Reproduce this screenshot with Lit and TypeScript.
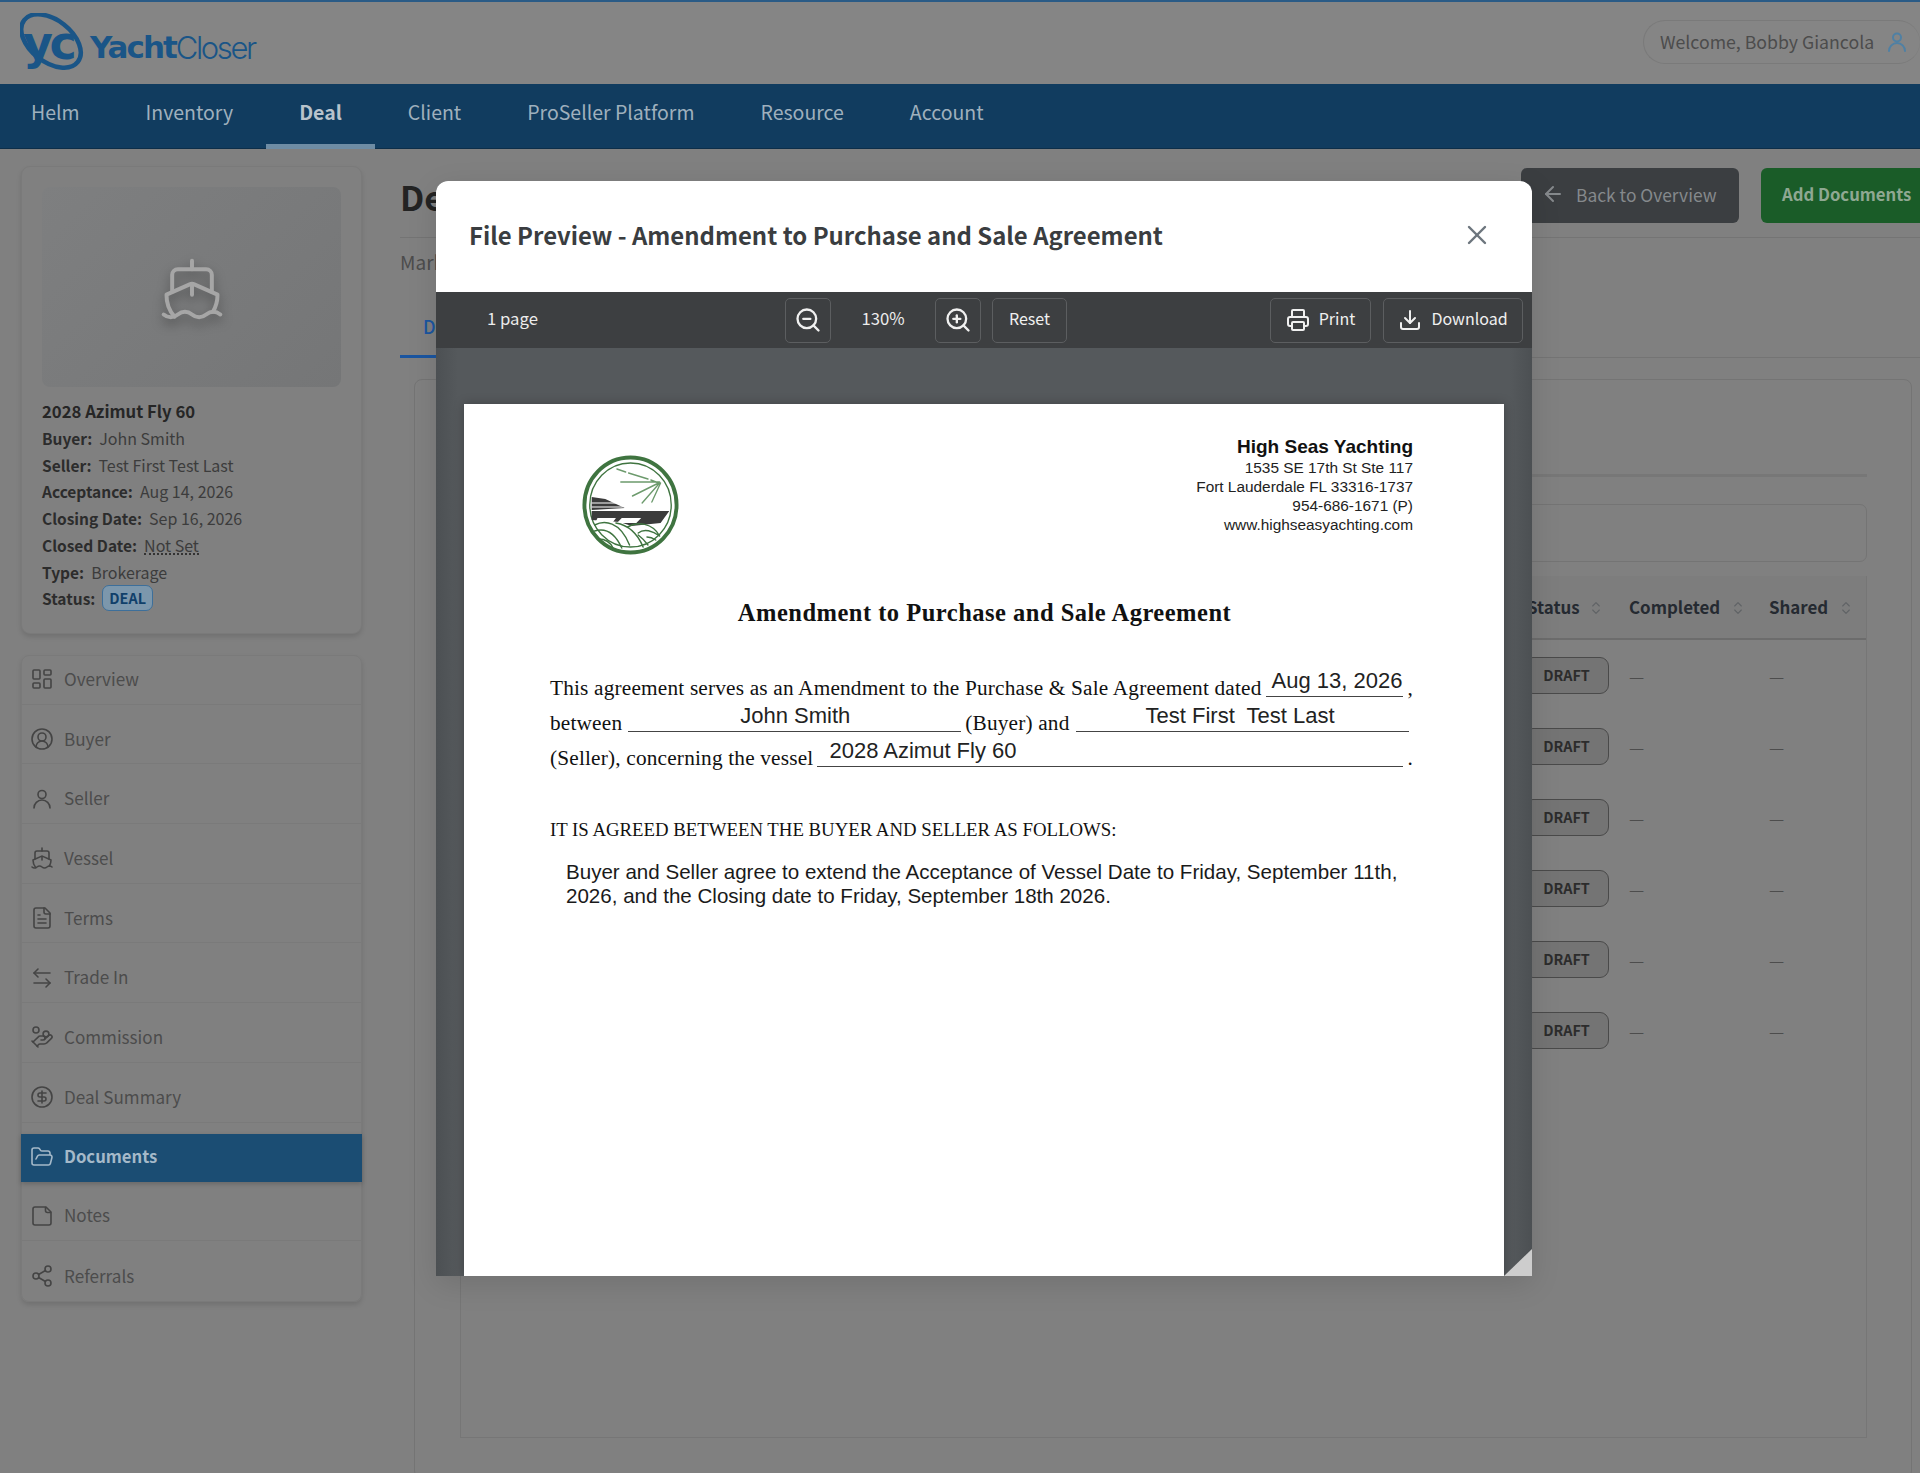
import { LitElement, html, css, svg } from "lit";
import { customElement } from "lit/decorators.js";

const ic = (body: unknown, cls = "ic") =>
  html`<svg class=${cls} viewBox="0 0 24 24" fill="none" stroke="currentColor" stroke-width="2" stroke-linecap="round" stroke-linejoin="round">${body}</svg>`;

const icons: Record<string, unknown> = {
  overview: svg`<rect x="3" y="3" width="7" height="9" rx="1"/><rect x="14" y="3" width="7" height="5" rx="1"/><rect x="14" y="12" width="7" height="9" rx="1"/><rect x="3" y="16" width="7" height="5" rx="1"/>`,
  buyer: svg`<path d="M18 20a6 6 0 0 0-12 0"/><circle cx="12" cy="10" r="4"/><circle cx="12" cy="12" r="10"/>`,
  seller: svg`<circle cx="12" cy="7.5" r="4"/><path d="M20 21a8 8 0 0 0-16 0"/>`,
  ship: svg`<path d="M12 10.189V14"/><path d="M12 2v3"/><path d="M19 13V7a2 2 0 0 0-2-2H7a2 2 0 0 0-2 2v6"/><path d="M19.38 20A11.6 11.6 0 0 0 21 14l-8.188-3.639a2 2 0 0 0-1.624 0L3 14a11.6 11.6 0 0 0 2.81 7.76"/><path d="M2 21c.6.5 1.2 1 2.5 1 2.5 0 2.5-2 5-2 1.3 0 1.9.5 2.5 1s1.2 1 2.5 1c2.5 0 2.5-2 5-2 1.3 0 1.9.5 2.5 1"/>`,
  terms: svg`<path d="M15 2H6a2 2 0 0 0-2 2v16a2 2 0 0 0 2 2h12a2 2 0 0 0 2-2V7Z"/><path d="M14 2v4a2 2 0 0 0 2 2h4"/><path d="M10 9H8"/><path d="M16 13H8"/><path d="M16 17H8"/>`,
  trade: svg`<path d="M8 3 4 7l4 4"/><path d="M4 7h16"/><path d="m16 21 4-4-4-4"/><path d="M20 17H4"/>`,
  commission: svg`<path d="M11 15h2a2 2 0 1 0 0-4h-3c-.6 0-1.1.2-1.4.6L3 17"/><path d="m7 21 1.6-1.4c.3-.4.8-.6 1.4-.6h4c1.1 0 2.1-.4 2.8-1.2l4.6-4.4a2 2 0 0 0-2.75-2.91l-4.2 3.9"/><path d="m2 16 6 6"/><circle cx="16" cy="9" r="2.9"/><circle cx="6" cy="5" r="3"/>`,
  dollar: svg`<circle cx="12" cy="12" r="10"/><path d="M16 8h-6a2 2 0 1 0 0 4h4a2 2 0 1 1 0 4H8"/><path d="M12 18V6"/>`,
  folder: svg`<path d="m6 14 1.5-2.9A2 2 0 0 1 9.24 10H20a2 2 0 0 1 1.94 2.5l-1.54 6a2 2 0 0 1-1.95 1.5H4a2 2 0 0 1-2-2V5a2 2 0 0 1 2-2h3.9a2 2 0 0 1 1.69.9l.81 1.2a2 2 0 0 0 1.67.9H18a2 2 0 0 1 2 2v2"/>`,
  note: svg`<path d="M16 3H5a2 2 0 0 0-2 2v14a2 2 0 0 0 2 2h14a2 2 0 0 0 2-2V8Z"/><path d="M15.5 3.5v3a2 2 0 0 0 2 2h3"/>`,
  share: svg`<circle cx="18" cy="5" r="3"/><circle cx="6" cy="12" r="3"/><circle cx="18" cy="19" r="3"/><line x1="8.59" y1="13.51" x2="15.42" y2="17.49"/><line x1="15.41" y1="6.51" x2="8.59" y2="10.49"/>`,
  zoomOut: svg`<circle cx="11" cy="11" r="8"/><line x1="21" y1="21" x2="16.65" y2="16.65"/><line x1="8" y1="11" x2="14" y2="11"/>`,
  zoomIn: svg`<circle cx="11" cy="11" r="8"/><line x1="21" y1="21" x2="16.65" y2="16.65"/><line x1="11" y1="8" x2="11" y2="14"/><line x1="8" y1="11" x2="14" y2="11"/>`,
  print: svg`<path d="M6 18H4a2 2 0 0 1-2-2v-5a2 2 0 0 1 2-2h16a2 2 0 0 1 2 2v5a2 2 0 0 1-2 2h-2"/><path d="M6 9V3a1 1 0 0 1 1-1h10a1 1 0 0 1 1 1v6"/><rect x="6" y="14" width="12" height="8" rx="1"/>`,
  download: svg`<path d="M21 15v4a2 2 0 0 1-2 2H5a2 2 0 0 1-2-2v-4"/><polyline points="7 10 12 15 17 10"/><line x1="12" y1="15" x2="12" y2="3"/>`,
  back: svg`<path d="m12 19-7-7 7-7"/><path d="M19 12H5"/>`,
  x: svg`<path d="M18 6 6 18"/><path d="m6 6 12 12"/>`,
  sort: svg`<path d="m7 15 5 5 5-5"/><path d="m7 9 5-5 5 5"/>`,
};

const nav = ["Helm", "Inventory", "Deal", "Client", "ProSeller Platform", "Resource", "Account"];
const menu: [string, string][] = [
  ["overview", "Overview"], ["buyer", "Buyer"], ["seller", "Seller"], ["ship", "Vessel"],
  ["terms", "Terms"], ["trade", "Trade In"], ["commission", "Commission"], ["dollar", "Deal Summary"],
  ["folder", "Documents"], ["note", "Notes"], ["share", "Referrals"],
];
const info: [string, string][] = [
  ["Buyer:", "John Smith"], ["Seller:", "Test First Test Last"], ["Acceptance:", "Aug 14, 2026"],
  ["Closing Date:", "Sep 16, 2026"],
];

@customElement("app-root")
export class AppRoot extends LitElement {
  static styles = css`
    :host { display: block; position: relative; width: 1920px; height: 1473px; overflow: hidden; background: #808080; color: #2a2a2a; font-family: "Noto Sans CJK SC", "Noto Sans", sans-serif; }
    * { box-sizing: border-box; }
    .ic { width: 24px; height: 24px; flex: none; display: block; }
    .top { height: 84px; border-top: 2px solid #2a5b86; background: #858585; display: flex; align-items: center; justify-content: space-between; padding-left: 20px; }
    .logo { display: flex; align-items: center; height: 60px; color: #1a5587; }
    .mark { width: 70px; height: 60px; flex: none; }
    .mark text { font-family: "DejaVu Sans", sans-serif; font-weight: 700; font-size: 46px; letter-spacing: -3.5px; fill: #1a5587; }
    .yacht { font-family: "DejaVu Sans", sans-serif; font-weight: 700; font-size: 31px; letter-spacing: -2px; margin-top: 8px; }
    .closer { font-family: "Inter", sans-serif; font-weight: 300; font-size: 31px; letter-spacing: -2.4px; margin-top: 8px; }
    .pill { display: flex; align-items: center; justify-content: space-between; height: 44px; width: 277px; margin-top: -2px; padding: 0 11px 0 16px; border: 1px solid #7a7a7a; border-right: 0; border-radius: 22px; font-size: 17.7px; color: #4c4c4c; white-space: nowrap; }
    .pill span { margin-top: -2px; }
    .pill .ic { color: #4f80a4; }
    .nav { height: 65px; background: #113c5f; border-bottom: 1px solid #0d2e49; display: flex; padding-left: 31px; font-size: 19.5px; color: #9fb0bd; }
    .nav a { padding: 0 33px 11px; display: flex; align-items: center; height: 65px; }
    .nav a:first-child { padding-left: 0; }
    .nav a.on { font-weight: 700; color: #b8c3cc; border-bottom: 5px solid #6e8ca4; padding-bottom: 6px; }
    .body { display: flex; }
    aside { width: 341px; margin: 17px 38px 0 21px; flex: none; }
    .card { height: 468px; border: 1px solid #7a7a7a; border-radius: 9px; padding: 20px 20px 0; background: #808080; box-shadow: 0 3px 5px rgba(0,0,0,.12); }
    .photo { height: 200px; padding-top: 4px; border-radius: 8px; background: linear-gradient(135deg, #7e7f80, #757677); display: flex; align-items: center; justify-content: center; color: #a6a6a6; }
    .boat { width: 68px; height: 68px; stroke-width: 1.4; filter: drop-shadow(0 5px 6px rgba(0,0,0,.35)); }
    .info { margin-top: 10px; font-size: 16px; line-height: 26.7px; color: #3c3c3c; white-space: nowrap; }
    .name { font-size: 16.7px; font-weight: 700; line-height: 28px; color: #262626; }
    .info b { font-size: 15.5px; font-weight: 700; color: #2c2c2c; margin-right: 7px; }
    .dotted { border-bottom: 2px dotted #333; line-height: 1; display: inline-block; }
    .badge { display: inline-block; height: 26px; line-height: 23px; padding: 0 6px; border: 1px solid #3d6f9a; border-radius: 7px; background: #7c97ac; color: #10406a; font-weight: 700; font-size: 14.4px; vertical-align: 1px; }
    .menu { margin-top: 21px; border: 1px solid #7a7a7a; border-radius: 8px; box-shadow: 0 3px 5px rgba(0,0,0,.12); display: flex; flex-direction: column; gap: 11px; }
    .menu a { height: 48.7px; display: flex; align-items: center; gap: 10px; padding-left: 8px; font-size: 17.1px; color: #4c4c4c; border-bottom: 1px solid #7a7a7a; }
    .menu a span { margin-top: -3px; }
    .menu a:last-child { border-bottom: 0; }
    .menu a .ic { stroke-width: 1.6; color: #444; margin-top: -1px; }
    .menu a.on { background: #1b4d73; color: #a5b9c9; font-size: 16.7px; font-weight: 700; border: 0; margin: 0 -1px; height: 48px; box-shadow: 0 2px 5px rgba(0,0,0,.2); padding-left: 9px; }
    .menu a.on .ic { color: #a5b9c9; }
    main { flex: 1; min-width: 0; padding-top: 19px; }
    .head { display: flex; justify-content: space-between; height: 70px; border-bottom: 1px solid #747474; padding-bottom: 15px; }
    h1 { margin: 0; font-size: 34px; line-height: 58px; font-weight: 700; color: #232323; }
    .btns { display: flex; gap: 22px; margin-right: -13px; }
    .btn { height: 55px; border-radius: 6px; display: flex; align-items: center; font-size: 17.4px; padding-bottom: 3px; }
    .back { width: 218px; padding-left: 20px; gap: 11px; background: #3b3e41; color: #85898c; }
    .add { width: 172px; padding-left: 21px; background: #1a5c28; color: #8fa892; font-weight: 700; font-size: 16.7px; }
    .sub { margin-top: 14px; font-size: 19px; line-height: 20px; color: #4c4c4c; }
    .tabs { margin-top: 25px; height: 61px; border-bottom: 1px solid #747474; display: flex; }
    .tab { height: 61px; padding: 0 23px; line-height: 58px; font-size: 18px; font-weight: 500; color: #1a55a0; border-bottom: 3px solid #1a55a0; }
    .panel { margin: 21px 8px 0 14px; height: 1100px; border: 1px solid #747474; border-radius: 8px; padding: 0 44px 0 45px; }
    .ph { height: 97px; border-bottom: 3px solid #777; }
    .search { margin-top: 27px; height: 58px; border: 1px solid #747474; border-radius: 7px; }
    .table { margin-top: 14px; height: 862px; border: 1px solid #767676; border-top: 0; }
    .row { display: grid; grid-template-columns: 1fr 105px 140px 97px; align-items: center; height: 71px; }
    .row.hd { height: 64px; padding-bottom: 2px; background: #7d7d7d; border-bottom: 2px solid #6c6c6c; font-weight: 700; font-size: 16.9px; color: #252a31; }
    .cell { display: flex; align-items: center; gap: 10px; }
    .cell .ic { width: 16px; height: 18px; color: #5f6265; stroke-width: 1.6; margin-top: 3px; }
    .cell.st { padding-left: 3px; gap: 8px; }
    .draft { width: 85px; height: 37px; padding-bottom: 2px; display: flex; align-items: center; justify-content: center; background: #747474; border: 1px solid #4a4a4a; border-radius: 9px; font-size: 14.4px; font-weight: 700; color: #2c2c2c; }
    .dash { font-size: 17px; color: #4d4d4d; }

    .modal { position: absolute; left: 436px; top: 181px; width: 1096px; height: 1095px; background: #525659; border-radius: 12px 12px 0 0; box-shadow: 0 8px 30px rgba(0,0,0,.12); overflow: hidden; display: flex; flex-direction: column; }
    .mh { height: 111px; background: #fff; display: flex; align-items: center; justify-content: space-between; padding: 0 39px 0 33px; flex: none; }
    .mh h2 { margin: -5px 0 0; font-size: 23.9px; font-weight: 600; color: #3a3d40; white-space: nowrap; }
    .close { width: 32px; height: 32px; color: #6c757d; margin-top: -3px; stroke-width: 1.8; }
    .bar { height: 56px; background: #3d3f41; flex: none; display: flex; align-items: center; color: #ececec; font-size: 16.7px; padding-left: 51px; padding-right: 9px; }
    .pages { width: 298px; margin-top: -4px; }
    .tb { height: 45px; border: 1px solid #5c5e60; border-radius: 5px; display: flex; align-items: center; justify-content: center; gap: 9px; color: #f0f0f0; font-size: 16px; }
    .tb span { margin-top: -4px; }
    .tb .ic { width: 24px; height: 24px; }
    .tb.sq { width: 46px; }
    .tb.sq .ic { width: 28px; height: 28px; }
    .pct { width: 104px; text-align: center; margin-top: -4px; }
    .reset { width: 75px; margin-left: 11px; }
    .print { width: 101px; margin-left: auto; }
    .dl { width: 140px; margin-left: 12px; }
    .gutter { flex: 1; padding: 56px 28px 0; position: relative; background: linear-gradient(90deg, #4c5053, #55595c 2%, #55595c 98%, #4c5053); }
    .pg { height: 100%; background: #fff; padding: 32px 91px 0 86px; color: #111; box-shadow: 0 0 10px rgba(0,0,0,.25); font-family: "Liberation Serif", serif; font-size: 21.3px; }
    .corner { position: absolute; right: 0; bottom: 0; width: 28px; height: 27px; background: #cdcdcd; clip-path: polygon(100% 0, 100% 100%, 0 100%); }
    .lh { display: flex; justify-content: space-between; height: 123px; }
    .seal { width: 97px; height: 100px; margin: 19px 0 0 32px; }
    .addr { font-family: "Liberation Sans", sans-serif; font-size: 15.4px; line-height: 19px; text-align: right; color: #222; }
    .addr b { display: block; font-size: 19px; line-height: 22px; color: #111; }
    .pg h3 { margin: 39px 0 0 6px; text-align: center; font-size: 24.5px; line-height: 30px; font-weight: 700; letter-spacing: .5px; }
    .ln { display: flex; align-items: flex-end; height: 35px; white-space: nowrap; line-height: 22px; letter-spacing: .18px; }
    .ln.first { margin-top: 34px; }
    .ln .t { margin-bottom: -2px; }
    .fld { border-bottom: 1.5px solid #444; font-family: "Liberation Sans", sans-serif; font-size: 22px; letter-spacing: 0; line-height: 28px; height: 30px; color: #222; flex: 1; margin: 0 4px 0 6px; white-space: pre; }
    .f1 { padding-left: 6px; margin-left: 4px; }
    .f2 { padding-left: 112px; flex: none; width: 333px; }
    .f3 { padding-left: 70px; }
    .f4 { padding-left: 12px; margin-left: 4px; }
    .agreed { margin-top: 52px; line-height: 22px; font-size: 18.8px; white-space: nowrap; }
    .terms { margin: 19px 0 0 16px; font-family: "Liberation Sans", sans-serif; font-size: 20.57px; line-height: 23.5px; color: #1a1a1a; white-space: nowrap; }
  `;

  private seal() {
    return html`<svg class="seal" viewBox="0 0 100 100" fill="none" preserveAspectRatio="none">
      <circle cx="50" cy="50" r="47.5" stroke="#3f7440" stroke-width="4"/>
      <circle cx="50" cy="50" r="42" stroke="#3f7440" stroke-width="1.4"/>
      <g stroke="#6c9a6c" stroke-width="1.4" stroke-linecap="round">
        <path d="M36 14l9 3M48 18l20 6M71 25l8 3M40 27h40M52 41l27-13M62 48l18-20M72 47l9-19"/>
      </g>
      <path d="M10 42l14 2 20 9-34 2zM10 56l80 0-9 12-30 3-12-4-29-2z" fill="#3b3b3b"/>
      <path d="M16 63h19l-3 4H14zM41 63h20l-5 5H36z" fill="#fff"/>
      <path d="M10 48h28M10 52h32" stroke="#fff" stroke-width="1.2"/>
      <g stroke="#3f7440" stroke-width="1.5" stroke-linecap="round">
        <path d="M13 70c10-5 26-4 36 20M13 76c10-3 20 0 28 17M17 84c6 0 12 3 15 9M35 68c12 2 22 10 28 24M47 72c10-6 26-4 33 9M58 78c6-5 15-2 22 3M68 90c-3-4-6-7-10-10M76 85c-3-2-7-3-9-3"/>
      </g>
    </svg>`;
  }

  render() {
    return html`
      <div class="top">
        <div class="logo">
          <svg class="mark" viewBox="0 0 70 60" fill="none">
            <ellipse cx="31" cy="28" rx="34" ry="21" transform="rotate(38 31 28)" stroke="#1a5587" stroke-width="4.5"/>
            <text x="3" y="46">yc</text>
          </svg>
          <span class="yacht">Yacht</span><span class="closer">Closer</span>
        </div>
        <div class="pill"><span>Welcome, Bobby Giancola</span>${ic(icons.seller)}</div>
      </div>
      <div class="nav">${nav.map((n) => html`<a class=${n === "Deal" ? "on" : ""}>${n}</a>`)}</div>
      <div class="body">
        <aside>
          <div class="card">
            <div class="photo">${ic(icons.ship, "boat")}</div>
            <div class="info">
              <div class="name">2028 Azimut Fly 60</div>
              ${info.map(([k, v]) => html`<div><b>${k}</b>${v}</div>`)}
              <div><b>Closed Date:</b><span class="dotted">Not Set</span></div>
              <div><b>Type:</b>Brokerage</div>
              <div><b>Status:</b><span class="badge">DEAL</span></div>
            </div>
          </div>
          <div class="menu">
            ${menu.map(([i, l]) => html`<a class=${l === "Documents" ? "on" : ""}>${ic(icons[i])}<span>${l}</span></a>`)}
          </div>
        </aside>
        <main>
          <div class="head">
            <h1>Deal Documents</h1>
            <div class="btns">
              <div class="btn back">${ic(icons.back)}Back to Overview</div>
              <div class="btn add">Add Documents</div>
            </div>
          </div>
          <div class="sub">Mark and manage documents for this deal</div>
          <div class="tabs"><div class="tab">Documents</div></div>
          <div class="panel">
            <div class="ph"></div>
            <div class="search"></div>
            <div class="table">
              <div class="row hd">
                <div class="cell"></div>
                <div class="cell st">Status ${ic(icons.sort)}</div>
                <div class="cell">Completed ${ic(icons.sort)}</div>
                <div class="cell">Shared ${ic(icons.sort)}</div>
              </div>
              ${[0, 1, 2, 3, 4, 5].map(() => html`
                <div class="row">
                  <div></div>
                  <div><div class="draft">DRAFT</div></div>
                  <div class="dash">—</div>
                  <div class="dash">—</div>
                </div>`)}
            </div>
          </div>
        </main>
      </div>

      <div class="modal">
        <div class="mh">
          <h2>File Preview - Amendment to Purchase and Sale Agreement</h2>
          ${ic(icons.x, "close")}
        </div>
        <div class="bar">
          <div class="pages">1 page</div>
          <div class="tb sq">${ic(icons.zoomOut)}</div>
          <div class="pct">130%</div>
          <div class="tb sq">${ic(icons.zoomIn)}</div>
          <div class="tb reset"><span>Reset</span></div>
          <div class="tb print">${ic(icons.print)}<span>Print</span></div>
          <div class="tb dl">${ic(icons.download)}<span>Download</span></div>
        </div>
        <div class="gutter">
          <div class="pg">
            <div class="lh">
              ${this.seal()}
              <div class="addr">
                <b>High Seas Yachting</b>
                1535 SE 17th St Ste 117<br />
                Fort Lauderdale FL 33316-1737<br />
                954-686-1671 (P)<br />
                www.highseasyachting.com
              </div>
            </div>
            <h3>Amendment to Purchase and Sale Agreement</h3>
            <div class="ln first"><span class="t">This agreement serves as an Amendment to the Purchase &amp; Sale Agreement dated</span><span class="fld f1">Aug 13, 2026</span><span class="t">,</span></div>
            <div class="ln"><span class="t">between</span><span class="fld f2">John Smith</span><span class="t">(Buyer) and</span><span class="fld f3">Test First  Test Last</span></div>
            <div class="ln"><span class="t">(Seller), concerning the vessel</span><span class="fld f4">2028 Azimut Fly 60</span><span class="t">.</span></div>
            <div class="agreed">IT IS AGREED BETWEEN THE BUYER AND SELLER AS FOLLOWS:</div>
            <div class="terms">Buyer and Seller agree to extend the Acceptance of Vessel Date to Friday, September 11th,<br />2026, and the Closing date to Friday, September 18th 2026.</div>
          </div>
          <div class="corner"></div>
        </div>
      </div>
    `;
  }
}
